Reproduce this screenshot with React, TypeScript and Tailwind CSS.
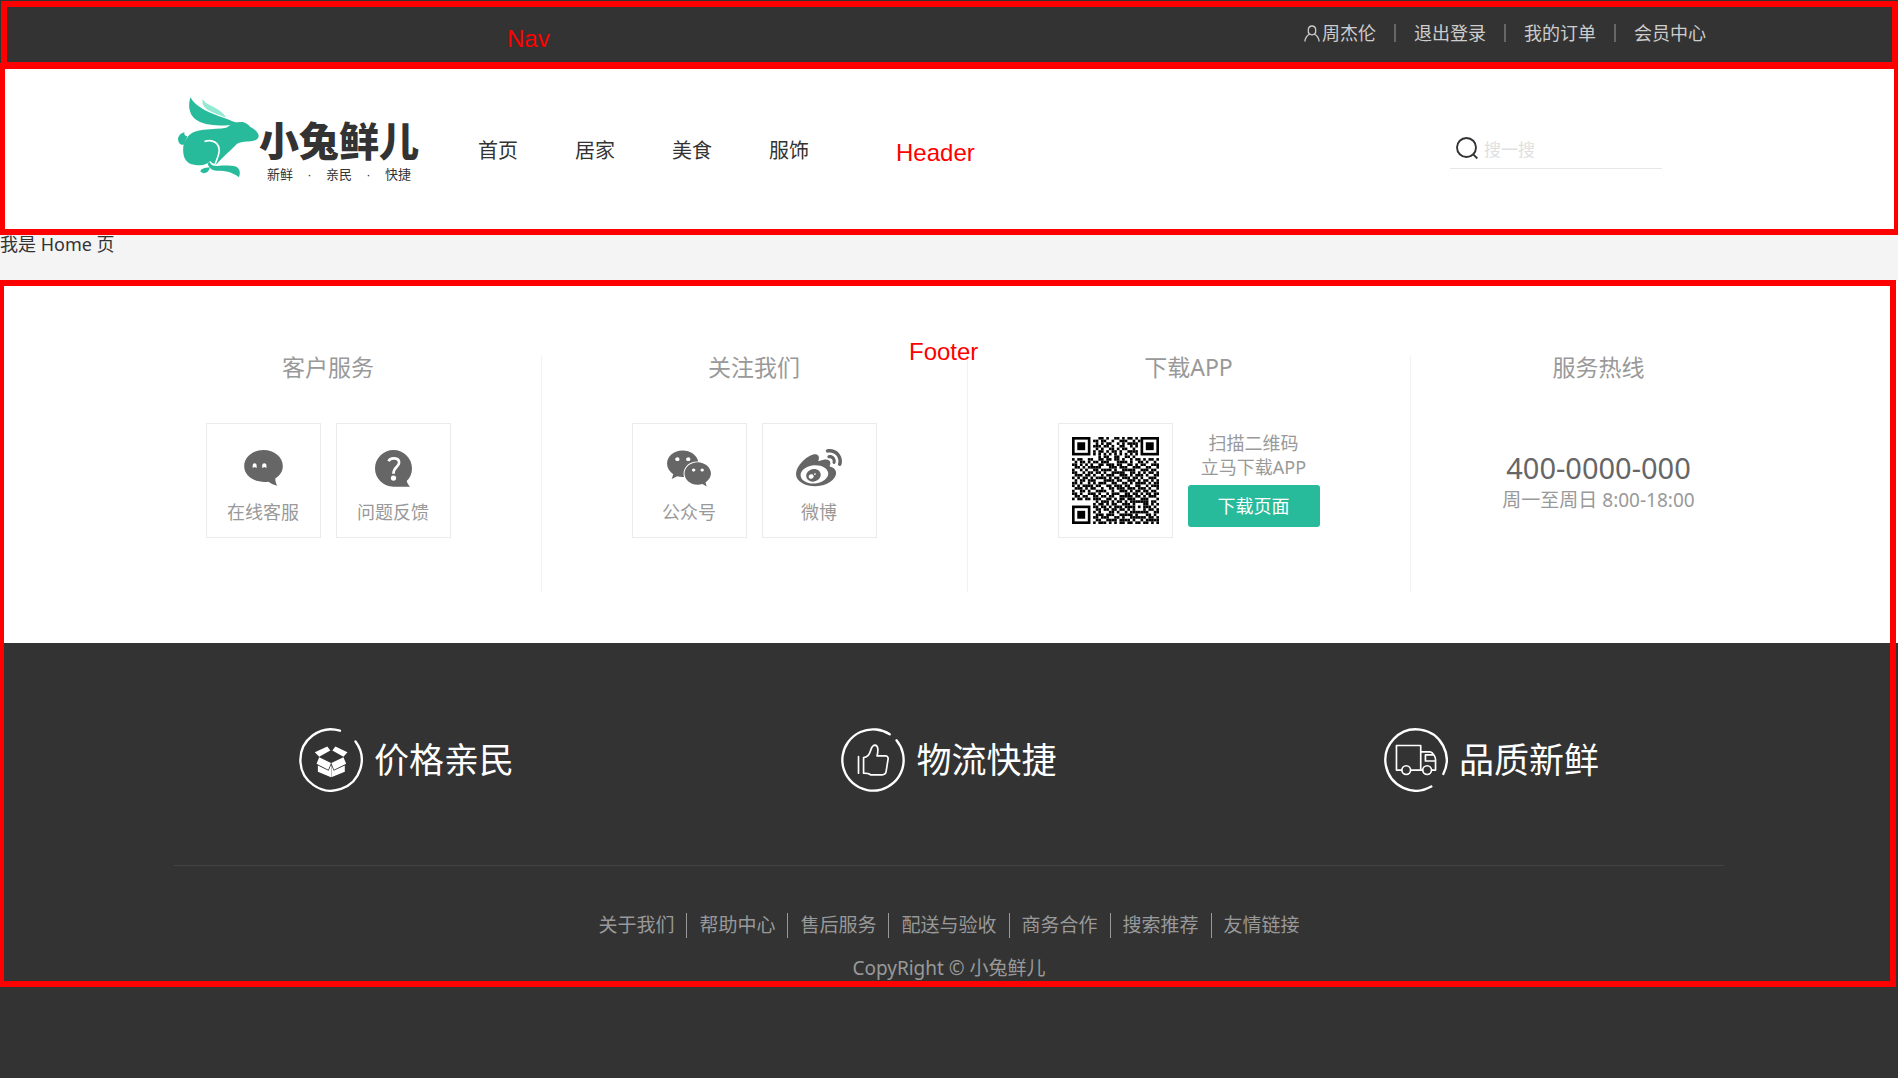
import type { ReactNode } from 'react'
import { FaWeibo, FaWeixin } from 'react-icons/fa'

const accountLinks = ['退出登录', '我的订单', '会员中心']
const categories = ['首页', '居家', '美食', '服饰']
const siteLinks = ['关于我们', '帮助中心', '售后服务', '配送与验收', '商务合作', '搜索推荐', '友情链接']

function UserIcon() {
  return (
    <svg viewBox="0 0 16 17" className="h-[17px] w-4" fill="none" stroke="currentColor" strokeWidth="1.3" aria-hidden="true">
      <path d="M5.6 9 C3.6 7.600 3.300 1 8 1 C12.700 1 12.400 7.600 10.400 9 C9 10 7 10 5.600 9 Z" />
      <path d="M5.600 9 C3 10.500 1.200 13 0.800 16.500 M10.400 9 C13 10.500 14.800 13 15.200 16.500" />
    </svg>
  )
}

function SearchIcon() {
  return (
    <svg viewBox="0 0 22 22" className="size-[22px] shrink-0" fill="none" stroke="#333" strokeWidth="1.900" aria-hidden="true">
      <circle cx="10.500" cy="10.500" r="9.500" />
      <path d="M17 17.200 L21.300 21.500" />
    </svg>
  )
}

function Rabbit() {
  return (
    <svg viewBox="54 36 242 242" className="size-[81px] shrink-0" fill="#27ba9b" aria-hidden="true">
      <path d="M91 37 C108 68 150 85 190 98 C208 104 220 110 232 114 C222 120 200 122 180 121 C150 121 122 116 105 102 C86 86 84 60 91 37 Z" />
      <path fill="#93ead3" d="M128 42 C134 58 160 62 180 78 C189 85 194 91 198 98 C178 90 158 84 143 75 C130 66 125 54 128 42 Z" />
      <path d="M200 127 C214 115 230 110 247 111 C258 113 264 119 270 126 C284 132 296 144 295 153 C294 164 280 168 264 169 C248 170 236 170 226 180 C208 199 186 216 168 238 L158 234 C152 230 150 226 148 228 C140 240 122 241 106 239 C86 237 72 226 70 204 C68 186 70 174 80 160 C90 143 106 137 130 134 C158 130 180 132 200 127 Z" />
      <path d="M73 141 C72 148 74 151 82 153 L72 178 C62 182 54 172 54 160 C56 149 64 143 73 141 Z" />
      <path d="M147 226 C150 240 160 243 172 242 C192 240 212 240 226 244 C240 250 241 264 236 276 C218 260 196 256 172 256 C158 257 150 252 143 238 Z" />
      <path d="M121 259 C122 250 134 247 149 247 C147 258 140 264 130 264 Z" />
      <path d="M133 169 C158 160 178 174 177 198 C176 212 170 222 165 236" fill="none" stroke="#fff" strokeWidth="5" />
    </svg>
  )
}

function Logo() {
  return (
    <a href="#" className="flex w-[250px] items-start self-start pt-[31px] pl-1 font-['Liberation_Sans','Noto_Sans_CJK_SC',sans-serif]">
      <Rabbit />
      <span className="flex flex-col pt-6 text-[#333]">
        <span className="text-[40px] leading-[42px] font-black whitespace-nowrap">小兔鲜儿</span>
        <span className="ml-2 flex w-[144px] justify-between pt-1 text-[13px] leading-4">
          <span>新鲜</span>
          <span>·</span>
          <span>亲民</span>
          <span>·</span>
          <span>快捷</span>
        </span>
      </span>
    </a>
  )
}

function ChatIcon() {
  return (
    <svg viewBox="190 358 118 110" className="h-9 w-[39px]" fill="#666" aria-hidden="true">
      <path d="M249 358 C282 358 308 380 308 407 C308 423 300 436 285 445 C285 453 287 460 291 467 C281 465 272 461 264 455 C226 460 190 440 190 407 C190 380 216 358 249 358 Z" />
      <path fill="#fff" d="M216 413 V405 C216 396 228 396 228 405 V413 L222 410 Z M245 413 V405 C245 396 258 396 258 405 V413 L252 410 Z" />
    </svg>
  )
}

function QuestionIcon() {
  return (
    <svg viewBox="584 358 112 112" className="size-[37px]" fill="#666" aria-hidden="true">
      <path d="M640 358 C671 358 696 383 696 414 C696 430 690 442 680 452 C682 459 686 465 690 469 H640 C609 469 584 444 584 414 C584 383 609 358 640 358 Z" />
      <path d="M625 392 C630 380 657 380 657 396 C657 410 640 408 640 430" fill="none" stroke="#fff" strokeWidth="8" />
      <circle cx="640" cy="443" r="8" fill="#fff" />
    </svg>
  )
}

const qrRows = [
  '000000000011010011010110100000000',
  '000000001101100100111001010000000',
  '000000000101011001010111100000000',
  '000000001110110100110010100000000',
  '000000000101001101011001000000000',
  '000000001011010110100111100000000',
  '000000001010101010101010100000000',
  '000000000010110011001101000000000',
  '101100110011011011010010110101101',
  '010110101101110001111010011010010',
  '110101010011011101100110101100111',
  '011010111110001110111001110011001',
  '100101001101111010011111001110110',
  '110010110110100111110011010101101',
  '011101101001011100111010111010011',
  '101011010111101011011101101001110',
  '010110111000111101100111010110101',
  '110100101011100110011010111101011',
  '101011110110011011101100110010111',
  '011101011001001101110111011101001',
  '100110100111100100111010110110110',
  '110100111010010111001101101011011',
  '011011001101101100111110110101110',
  '101101101110011010110111001110001',
  '000000000101110101101011111110110',
  '000000001011010110011101000110101',
  '000000001101101011101111010111010',
  '000000000110110110110101000101101',
  '000000001010001101001011111110011',
  '000000000111011100111110100011010',
  '000000001101110011010011111101101',
  '000000000110011110111101001011111',
  '000000001011101010110110110110101',
]

const qrFinders = [
  [0, 0],
  [26, 0],
  [0, 26],
]

function QrCode() {
  return (
    <svg viewBox="0 0 33 33" className="size-[87px]" role="img" aria-label="QR">
      {qrFinders.map(([x, y]) => (
        <g key={`${x}-${y}`}>
          <rect x={x} y={y} width="7" height="7" />
          <rect x={x + 1} y={y + 1} width="5" height="5" fill="#fff" />
          <rect x={x + 2} y={y + 2} width="3" height="3" />
        </g>
      ))}
      {qrRows.flatMap((row, y) =>
        row.split('').map((cell, x) => (cell === '1' ? <rect key={`${x}-${y}`} x={x} y={y} width="1" height="1" /> : null)),
      )}
    </svg>
  )
}

function BoxIcon() {
  return (
    <svg viewBox="0 0 190 190" className="size-16" aria-hidden="true">
      <path d="M167.700 40.200 A91 91 0 1 1 121.600 8" fill="none" stroke="#fff" strokeWidth="7" strokeLinecap="round" />
      <path fill="#fff" d="M47 72 L84 55 L93 67 L60 85 Z M108 55 L144 72 L132 85 L99 67 Z M60 87 L95 104 L87 124 L52 106 Z M132 87 L96 104 L104 124 L140 106 Z M56 111 L88 127 L95 110 V146 L56 130 Z M136 111 L103 127 L96 110 V146 L136 130 Z" />
    </svg>
  )
}

function ThumbIcon() {
  return (
    <svg viewBox="0 0 190 190" className="size-16" fill="none" stroke="#fff" strokeWidth="5" strokeLinecap="round" strokeLinejoin="round" aria-hidden="true">
      <path d="M164.700 36.500 A91 91 0 1 1 144.600 18.700" strokeWidth="7" />
      <path d="M52 85 V134 M67 88 C77 86 83 81 86 72 C90 62 91 51 101 51 C111 52 111 66 107 83 L133 83 C140 84 141 90 139 97 L134 129 C133 136 129 139 122 139 L88 139 C82 134 74 134 67 134 Z" />
    </svg>
  )
}

function TruckIcon() {
  return (
    <svg viewBox="0 0 190 190" className="size-16" fill="none" stroke="#fff" strokeWidth="5" strokeLinecap="round" strokeLinejoin="round" aria-hidden="true">
      <path d="M140.500 173.800 A91 91 0 1 1 176.100 136.300" strokeWidth="7" />
      <path d="M52 125 H37 V52 H109 V125 H80 M109 71 H137 C145 72 153 86 153 94 V125 H142 M114 125 H109 M144 80 H123 V98 H152" />
      <circle cx="66" cy="125" r="13" />
      <circle cx="128" cy="125" r="13" />
    </svg>
  )
}

function ContactCard({ label, icon }: { label: string; icon: ReactNode }) {
  return (
    <a href="#" className="flex size-[115px] flex-col items-center border border-[#ebebeb] pt-[25px] text-[#999]">
      <span className="flex h-[38px] items-center">{icon}</span>
      <span className="mt-[13px] text-[18px] leading-6">{label}</span>
    </a>
  )
}

function ContactColumn({ title, last = false, children }: { title: string; last?: boolean; children: ReactNode }) {
  return (
    <section className={last ? 'h-[236px] px-[90px]' : 'h-[236px] border-r border-[#f2f2f2] px-[90px]'}>
      <h2 className="text-center text-[23px] leading-[22px] text-[#999]">{title}</h2>
      <div className="mt-[45px] flex gap-[15px]">{children}</div>
    </section>
  )
}

function Slogan({ icon, text }: { icon: ReactNode; text: string }) {
  return (
    <div className="flex items-center gap-[11px] text-white">
      {icon}
      <span className="text-[35px] leading-[50px]">{text}</span>
    </div>
  )
}

function Annotation({ label, labelClass, frameClass }: { label: string; labelClass: string; frameClass: string }) {
  return (
    <>
      <div className={`pointer-events-none absolute z-10 border-6 border-[#f00] ${frameClass}`} />
      <span className={`pointer-events-none absolute z-10 font-['Liberation_Sans',Arial,sans-serif] text-2xl leading-6 text-[#f00] ${labelClass}`}>{label}</span>
    </>
  )
}

export default function App() {
  return (
    <div className="flex min-h-screen flex-col overflow-x-hidden bg-[#f4f4f4] font-['Noto_Sans','Noto_Sans_CJK_SC',sans-serif] text-[#333]">
      <nav className="relative bg-[#333]">
        <Annotation label="Nav" labelClass="top-[27px] left-[507px]" frameClass="top-px right-0 -bottom-0.5 left-px" />
        <ul className="mx-auto flex h-[66px] max-w-[1550px] items-center justify-end text-[18px] leading-[18px] text-[#cdcdcd]">
          <li className="px-[18px]">
            <a href="#" className="flex items-center gap-0.5">
              <UserIcon />
              周杰伦
            </a>
          </li>
          {accountLinks.map((text) => (
            <li key={text} className="border-l-2 border-[#666] px-[18px]">
              <a href="#">{text}</a>
            </li>
          ))}
        </ul>
      </nav>

      <header className="relative bg-white">
        <Annotation label="Header" labelClass="top-[75px] left-[896px]" frameClass="-top-[3px] -right-0.5 -bottom-1 -left-px" />
        <div className="mx-auto flex h-[165px] max-w-[1550px] items-center">
          <Logo />
          <ul className="ml-[54px] flex gap-[57px] pt-1 text-[20px] leading-[30px]">
            {categories.map((text) => (
              <li key={text}>
                <a href="#">{text}</a>
              </li>
            ))}
          </ul>
          <label className="mr-[62px] ml-auto flex h-10 w-[212px] items-center gap-1.5 border-b border-[#e7e7e7] pl-1.5">
            <SearchIcon />
            <input type="text" placeholder="搜一搜" aria-label="搜一搜" className="mt-1 w-full min-w-0 text-[17px] leading-6 outline-none placeholder:text-[#e0e0e0]" />
          </label>
        </div>
      </header>

      <main className="h-[50px] pt-px text-[18px] leading-6">我是 Home 页</main>

      <footer className="relative flex grow flex-col">
        <Annotation label="Footer" labelClass="top-[59px] left-[909px]" frameClass="-top-px right-0.5 -left-0.5 h-[707px]" />
        <div className="flex justify-center bg-white pt-[75px] pb-[51px] pl-1">
          <ContactColumn title="客户服务">
            <ContactCard label="在线客服" icon={<ChatIcon />} />
            <ContactCard label="问题反馈" icon={<QuestionIcon />} />
          </ContactColumn>
          <ContactColumn title="关注我们">
            <ContactCard label="公众号" icon={<FaWeixin className="h-[41px] w-[46px] text-[#666]" />} />
            <ContactCard label="微博" icon={<FaWeibo className="mt-0.5 size-[46px] text-[#666]" />} />
          </ContactColumn>
          <ContactColumn title="下载APP">
            <div className="flex size-[115px] items-center justify-center border border-[#ebebeb]">
              <QrCode />
            </div>
            <div className="w-[132px] pt-2 text-center text-[18px] leading-6 text-[#999]">
              <p>扫描二维码</p>
              <p>立马下载APP</p>
              <a href="#" className="mt-1.5 block h-[42px] rounded-[3px] bg-[#27ba9b] leading-[42px] text-white">
                下载页面
              </a>
            </div>
          </ContactColumn>
          <ContactColumn title="服务热线" last>
            <div className="w-[196px] pt-[25px] text-center whitespace-nowrap">
              <p className="text-[29px] leading-10 text-[#666]">400-0000-000</p>
              <p className="text-[19px] leading-6 text-[#999]">周一至周日 8:00-18:00</p>
            </div>
          </ContactColumn>
        </div>

        <div className="grow bg-[#333]">
          <div className="mx-auto max-w-[1550px]">
            <div className="flex justify-between border-b border-[#434343] px-[125px] pt-[85px] pb-[73px]">
              <Slogan icon={<BoxIcon />} text="价格亲民" />
              <Slogan icon={<ThumbIcon />} text="物流快捷" />
              <Slogan icon={<TruckIcon />} text="品质新鲜" />
            </div>
            <ul className="flex justify-center pt-[47px] text-[19px] leading-[25px] text-[#999]">
              {siteLinks.map((text) => (
                <li key={text} className="border-l border-[#999] px-3 first:border-l-0">
                  <a href="#">{text}</a>
                </li>
              ))}
            </ul>
            <p className="pt-[18px] text-center text-[19px] leading-[25px] text-[#999]">CopyRight © 小兔鲜儿</p>
          </div>
        </div>
      </footer>
    </div>
  )
}
